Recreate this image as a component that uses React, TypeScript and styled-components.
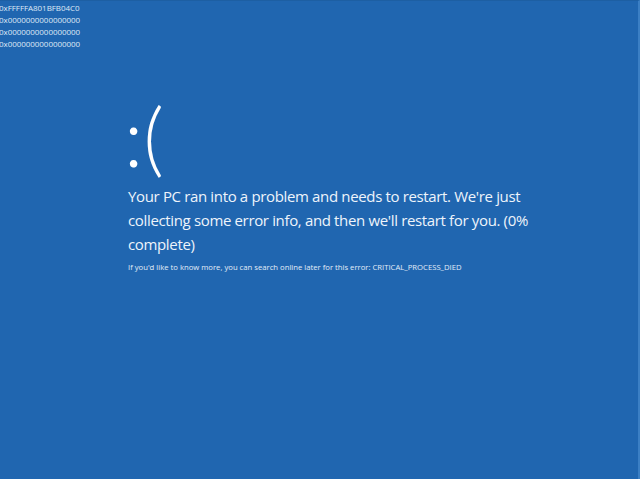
import { createGlobalStyle } from "styled-components"
import styled from "styled-components"

const GlobalStyle = createGlobalStyle`
    html, body {
        margin: 0;
        padding: 0;
        background: #2066b0;
    }
    #root {
        height: 479px;
    }
`

const stopCodes = ["0xFFFFFA801BFB04C0", "0x0000000000000000", "0x0000000000000000", "0x0000000000000000"]

export default function App() {
    return (
        <>
            <GlobalStyle />
            <Screen>
                <Codes>
                    {stopCodes.map((code, i) => (
                        <Code key={i}>{code}</Code>
                    ))}
                </Codes>
                <Body>
                    <Face>:(</Face>
                    <Message>
                        Your PC ran into a problem and needs to restart. We're just collecting some error
                        info, and then we'll restart for you. (0% complete)
                    </Message>
                    <Hint>
                        If you'd like to know more, you can search online later for this error:
                        CRITICAL_PROCESS_DIED
                    </Hint>
                </Body>
            </Screen>
        </>
    )
}

const Screen = styled.div`
    width: 640px;
    height: 479px;
    background: #2066b0;
    color: #eef4fb;
    font-family: "Open Sans", "Noto Sans", sans-serif;
    overflow: hidden;
    box-sizing: border-box;
    border-right: 2px solid #3b7fc4;
    border-top: 1px solid #1d5fa3;
`

const Codes = styled.div`
    display: flex;
    flex-direction: column;
    padding: 1px 0 0 0;
`

const Code = styled.div`
    font-size: 8px;
    line-height: 12px;
    height: 12px;
    letter-spacing: -0.05px;
    color: #dfe9f6;
    margin-left: -1px;
`

const Body = styled.div`
    display: flex;
    flex-direction: column;
    padding-left: 128px;
    padding-top: 38px;
`

const Face = styled.div`
    font-family: "Lato", "Open Sans", sans-serif;
    font-size: 80px;
    font-weight: 300;
    line-height: 96px;
    margin-left: -4px;
    color: #ffffff;
`

const Message = styled.div`
    width: 410px;
    font-size: 15px;
    line-height: 24px;
    letter-spacing: -0.35px;
    margin-top: 0px;
`

const Hint = styled.div`
    font-size: 7.7px;
    line-height: 12px;
    margin-top: 5px;
    color: #e3edf8;
`
